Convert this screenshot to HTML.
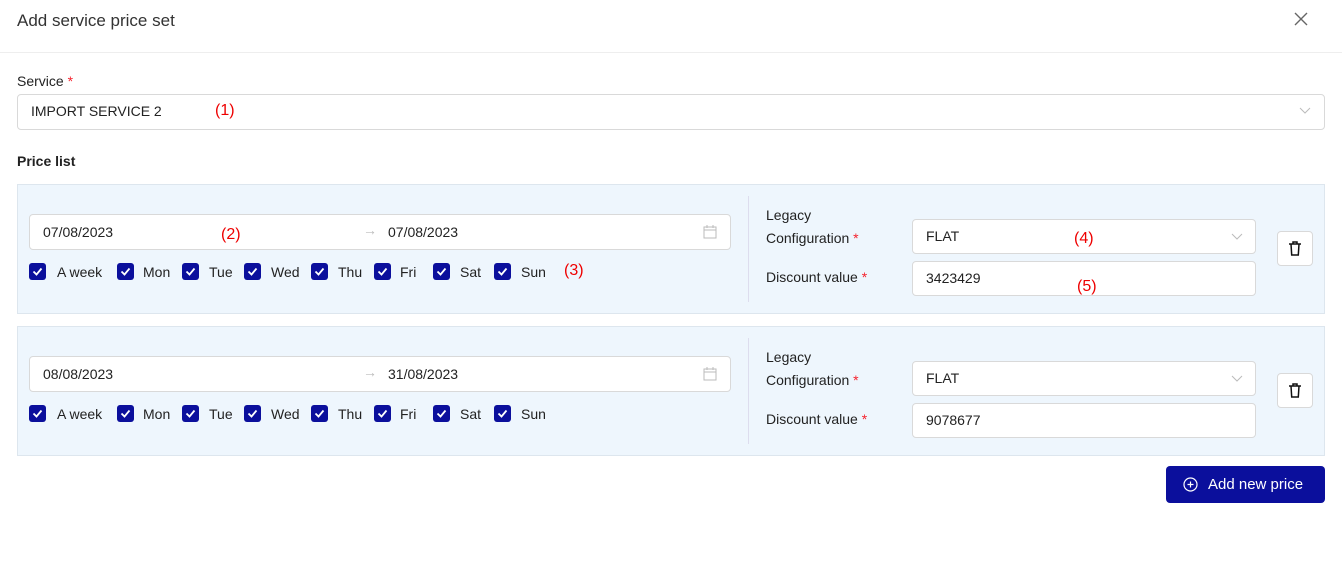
<!DOCTYPE html><html><head><style>
body{margin:0;width:1342px;height:569px;background:#fff;font-family:"Liberation Sans",sans-serif;font-size:14px;color:#222;position:relative;overflow:hidden}
.a{position:absolute}
.box{position:absolute;background:#fff;border:1px solid #d9d9d9;border-radius:4px;box-sizing:border-box}
.panel{position:absolute;left:17px;width:1308px;height:130px;background:#eef6fd;border:1px solid #dde6ee;box-sizing:border-box}
.cb{position:absolute;width:17px;height:17px;background:#0b0f9c;border-radius:3px}
.cb svg{position:absolute;left:3px;top:3px}
.red{color:#e00}
.star{color:#f5222d}
</style></head><body>
<div class="a" style="left:17px;top:11px;font-size:17px;color:#333">Add service price set</div>
<svg class="a" style="left:1294px;top:12px" width="14" height="14"><path d="M1 1L13 13M13 1L1 13" stroke="#666" stroke-width="1.4"/></svg>
<div class="a" style="left:0;top:52px;width:1342px;height:1px;background:#eee"></div>
<div class="a" style="left:17px;top:73px">Service <span class="star">*</span></div>
<div class="box" style="left:17px;top:94px;width:1308px;height:36px"></div>
<div class="a" style="left:31px;top:103px">IMPORT SERVICE 2</div>
<div class="a red" style="left:215px;top:102px;font-size:16px">(1)</div>
<svg class="a" style="left:1299px;top:107px" width="12" height="8"><path d="M1 1L6 6L11 1" stroke="#bbb" fill="none"/></svg>
<div class="a" style="left:17px;top:153px;font-weight:bold">Price list</div>

<script>
function panel(top,d1,d2,v,ann){
let h=`<div class="panel" style="top:${top}px"></div>
<div class="box" style="left:29px;top:${top+30}px;width:702px;height:36px"></div>
<div class="a" style="left:43px;top:${top+40}px">${d1}</div>
<div class="a" style="left:363px;top:${top+38}px;color:#bbb">&#8594;</div>
<div class="a" style="left:388px;top:${top+40}px">${d2}</div>
<svg class="a" style="left:703px;top:${top+41}px" width="14" height="14"><rect x="1" y="2" width="12" height="11" fill="none" stroke="#bbb"/><path d="M1 5H13M4 0V3M10 0V3" stroke="#bbb"/></svg>
<div class="a" style="left:748px;top:${top+12}px;width:1px;height:106px;background:#dde"></div>
<div class="a" style="left:766px;top:${top+20}px;line-height:23px">Legacy<br>Configuration <span class="star">*</span></div>
<div class="box" style="left:912px;top:${top+35}px;width:344px;height:35px"></div>
<div class="a" style="left:926px;top:${top+44}px">FLAT</div>
<svg class="a" style="left:1231px;top:${top+49}px" width="12" height="8"><path d="M1 1L6 6L11 1" stroke="#bbb" fill="none"/></svg>
<div class="a" style="left:766px;top:${top+85}px">Discount value <span class="star">*</span></div>
<div class="box" style="left:912px;top:${top+77}px;width:344px;height:35px"></div>
<div class="a" style="left:926px;top:${top+86}px">${v}</div>
<div class="box" style="left:1277px;top:${top+47}px;width:36px;height:35px"></div>
<svg class="a" style="left:1287px;top:${top+57}px" width="16" height="16"><path d="M2 3H14M6 3V1H10V3M4 3L4.7 14H11.3L12 3" stroke="#111" stroke-width="1.5" fill="none"/></svg>`;
const days=[[29,57,'A week'],[117,143,'Mon'],[182,209,'Tue'],[244,271,'Wed'],[311,338,'Thu'],[374,400,'Fri'],[433,460,'Sat'],[494,521,'Sun']];
for(const[b,t,s] of days){h+=`<div class="cb" style="left:${b}px;top:${top+79}px"><svg width="11" height="11"><path d="M1.5 5.5L4.5 8.5L9.5 2.5" stroke="#fff" stroke-width="1.8" fill="none"/></svg></div><div class="a" style="left:${t}px;top:${top+80}px">${s}</div>`}
if(ann){h+=`<div class="a red" style="left:221px;top:${top+42}px;font-size:16px">(2)</div><div class="a red" style="left:564px;top:${top+78}px;font-size:16px">(3)</div><div class="a red" style="left:1074px;top:${top+46}px;font-size:16px">(4)</div><div class="a red" style="left:1077px;top:${top+94}px;font-size:16px">(5)</div>`}
return h}
document.write(panel(184,'07/08/2023','07/08/2023','3423429',1)+panel(326,'08/08/2023','31/08/2023','9078677',0));
</script>
<div class="a" style="left:1166px;top:466px;width:159px;height:37px;background:#0b0f9c;border-radius:4px;color:#fff;font-size:15px;line-height:37px">
<svg class="a" style="left:17px;top:11px" width="15" height="15"><circle cx="7.5" cy="7.5" r="6.5" fill="none" stroke="#fff" stroke-width="1.2"/><path d="M7.5 4.5V10.5M4.5 7.5H10.5" stroke="#fff" stroke-width="1.2"/></svg>
<span style="position:absolute;left:42px">Add new price</span></div>
</body></html>
